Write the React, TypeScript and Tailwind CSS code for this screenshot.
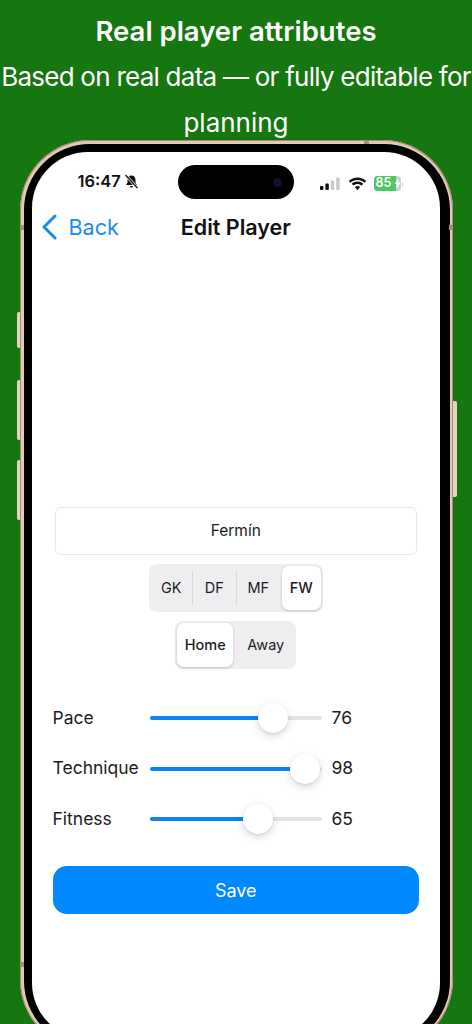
import React from 'react';

const font = "font-['Inter','Liberation_Sans',sans-serif]";

const positions = [
  { name: 'GK', width: 'w-[41px]' },
  { name: 'DF', width: 'w-[43px]' },
  { name: 'MF', width: 'w-[43px]' },
];

const attributes = [
  { label: 'Pace', value: 76 },
  { label: 'Technique', value: 98 },
  { label: 'Fitness', value: 65 },
];

const StatusIcons: React.FC = () => (
  <div className="flex items-center gap-[7px]">
    <svg width="21" height="13" viewBox="0 0 21 13">
      <rect x="0" y="9" width="3.400" height="4" rx="1" fill="#111" />
      <rect x="5.400" y="6.500" width="3.400" height="6.500" rx="1" fill="#111" />
      <rect x="10.800" y="3.500" width="3.400" height="9.500" rx="1" fill="#c9c9cc" />
      <rect x="16.200" y="0.500" width="3.400" height="12.500" rx="1" fill="#c9c9cc" />
    </svg>
    <svg width="19" height="14" viewBox="0 0 19 14">
      <path d="M9.500 3C12.200 3 14.600 4 16.500 5.800L18.200 4C15.900 1.800 12.800.4 9.500.4S3.100 1.800.8 4L2.500 5.800C4.400 4 6.800 3 9.500 3Z" fill="#111" />
      <path d="M9.500 7C11.100 7 12.500 7.600 13.600 8.600L15.300 6.800C13.700 5.400 11.700 4.500 9.500 4.500S5.300 5.400 3.700 6.800L5.400 8.600C6.500 7.600 7.900 7 9.500 7Z" fill="#111" />
      <path d="M9.500 9C8.500 9 7.600 9.400 6.900 10L9.500 13.300 12.100 10C11.400 9.400 10.500 9 9.500 9Z" fill="#111" />
    </svg>
    <div className="flex items-center">
      <div className="relative flex h-[15px] w-[27px] items-center overflow-hidden rounded-[4px] bg-[#cfcfd2]">
        <div className="flex h-full w-[22px] items-center bg-[#4cc764] pl-[2px] text-[12.500px] leading-none font-semibold text-white">85</div>
        <svg className="absolute right-[0px] top-[2px]" width="7" height="11" viewBox="0 0 7 10">
          <path d="M4.300 0 .5 5.600H3L2.300 10 6.500 4H3.800Z" fill="#fff" />
        </svg>
      </div>
      <div className="ml-[1px] h-[4px] w-[1.500px] rounded-r-full bg-[#cfcfd2]" />
    </div>
  </div>
);

const SliderRow: React.FC<{ label: string; value: number }> = ({ label, value }) => (
  <div className="flex h-[30px] items-center">
    <span className="w-[97px] text-[17.500px] text-[#1c1c1e]">{label}</span>
    <div className="relative h-[30px] w-[172px]">
      <div className="absolute left-0 right-0 top-[13px] h-[4px] rounded-full bg-[#e3e3e7]" />
      <div className="absolute left-0 top-[13px] h-[4px] rounded-full bg-[#0a84f0]" style={{ width: value * 1.42 + 16 }} />
      <div
        className="absolute top-0 h-[30px] w-[30px] rounded-full bg-white shadow-[0_3px_8px_rgba(0,0,0,0.16),0_1px_2px_rgba(0,0,0,0.08)]"
        style={{ left: value * 1.42 + 1 }}
      />
    </div>
    <span className="ml-[10px] text-[17.500px] text-[#1c1c1e]">{value}</span>
  </div>
);

const App: React.FC = () => {
  return (
    <div className={`h-[1024px] w-[472px] overflow-hidden bg-[#16760f] ${font}`}>
      <div className="h-[140px] pt-2 text-center text-[26px] leading-[46px] text-white">
        <div className="text-[27.500px] font-semibold">Real player attributes</div>
        <div className="whitespace-nowrap tracking-[-0.75px]">Based on real data — or fully editable for</div>
        <div>planning</div>
      </div>

      <div className="relative ml-[20px] h-[910px] w-[433px] rounded-[70px] bg-[#e3c9b6] p-[3.500px] shadow-[inset_0_0_0_1px_#a98a76]">
        {/* side buttons and antenna bands */}
        <div className="absolute left-[-3.500px] top-[172px] h-[36px] w-[3.500px] rounded-l-[2px] bg-[#e6d2c2]" />
        <div className="absolute left-[-3.500px] top-[240px] h-[60px] w-[3.500px] rounded-l-[2px] bg-[#e6d2c2]" />
        <div className="absolute left-[-3.500px] top-[320px] h-[60px] w-[3.500px] rounded-l-[2px] bg-[#e6d2c2]" />
        <div className="absolute right-[-3.500px] top-[261px] h-[96px] w-[3.500px] rounded-r-[2px] bg-[#e6d2c2]" />
        <div className="absolute left-0 top-[85px] h-[5px] w-[4px] bg-[#a98a76]" />
        <div className="absolute right-0 top-[85px] h-[5px] w-[4px] bg-[#a98a76]" />
        <div className="absolute left-0 top-[822px] h-[5px] w-[4px] bg-[#a98a76]" />
        <div className="absolute left-[344px] top-0 h-[4px] w-[5px] bg-[#a98a76]" />

        <div className="h-full rounded-[66px] bg-black pb-[8px] pl-[8px] pr-[9.500px] pt-[8.500px]">
          <div className="relative h-full rounded-[56px] bg-white text-[#111]">
            {/* dynamic island */}
            <div className="absolute left-[146px] top-[13px] flex h-[34px] w-[116px] items-center justify-end rounded-full bg-black pr-[12px]">
              <div className="h-[9px] w-[9px] rounded-full bg-[#10103a]" />
            </div>

            <div className="flex h-[58px] items-end justify-between pb-[19px] pl-[46px] pr-[37px]">
              <div className="flex items-center gap-[3px]">
                <span className="text-[16.500px] leading-[20px] font-semibold">16:47</span>
                <svg width="15" height="15" viewBox="0 0 15 15">
                  <path d="M7.500 1.500C5 1.500 3.500 3.400 3.500 6V8.800L2 11H13L11.500 8.800V6C11.500 3.400 10 1.500 7.500 1.500Z" fill="#111" />
                  <path d="M6 12H9C9 13 8.300 13.600 7.500 13.600S6 13 6 12Z" fill="#111" />
                  <path d="M1.500 1 13.500 14" stroke="#fff" strokeWidth="2.600" />
                  <path d="M1.500 1 13.500 14" stroke="#111" strokeWidth="1.300" />
                </svg>
              </div>
              <StatusIcons />
            </div>

            <div className="relative flex h-[34px] items-center justify-center">
              <div className="absolute left-[9px] top-[4px] flex items-center gap-[12px] text-[#1c8ceb]">
                <svg width="16" height="26" viewBox="0 0 16 26" fill="none">
                  <path d="M14 2 3 13l11 11" stroke="currentColor" strokeWidth="3" strokeLinecap="round" strokeLinejoin="round" />
                </svg>
                <span className="text-[21.500px] leading-[26px]">Back</span>
              </div>
              <span className="text-[21.500px] font-semibold">Edit Player</span>
            </div>

            <div className="mt-[263px] flex flex-col items-center">
              <div className="flex h-[48px] w-[362px] items-center justify-center rounded-[6px] border border-[#e8e8ec] text-[15.500px] text-[#1c1c1e]">
                Fermín
              </div>

              <div className="mt-[9px] flex h-[48px] w-[174px] items-center rounded-[8px] bg-[#eeeef0] p-[2px] text-[14.500px] text-[#1c1c1e]">
                {positions.map((p, i) => (
                  <React.Fragment key={p.name}>
                    <div className={`flex items-center justify-center ${p.width}`}>{p.name}</div>
                    {i < 2 && <div className="h-[34px] w-[1px] bg-[#d9d9dc]" />}
                  </React.Fragment>
                ))}
                <div className="ml-[2px] flex h-full w-[39px] items-center justify-center rounded-[7px] bg-white font-medium shadow-[0_1px_3px_rgba(0,0,0,0.2)]">
                  FW
                </div>
              </div>

              <div className="mt-[9px] flex h-[48px] w-[121px] items-center rounded-[8px] bg-[#eeeef0] p-[2px] text-[14.500px] text-[#1c1c1e]">
                <div className="flex h-full w-[56px] items-center justify-center rounded-[7px] bg-white font-medium shadow-[0_1px_3px_rgba(0,0,0,0.2)]">
                  Home
                </div>
                <div className="flex flex-1 items-center justify-center pl-[4px]">Away</div>
              </div>
            </div>

            <div className="mt-[34px] flex flex-col gap-[20.500px] pl-[21px]">
              {attributes.map((a) => (
                <SliderRow key={a.label} label={a.label} value={a.value} />
              ))}
            </div>

            <div className="mx-[21px] mt-[32px] flex h-[48px] items-center justify-center rounded-[14px] bg-[#0088ff] text-[18px] text-white">
              Save
            </div>
          </div>
        </div>
      </div>
    </div>
  );
};

export default App;
